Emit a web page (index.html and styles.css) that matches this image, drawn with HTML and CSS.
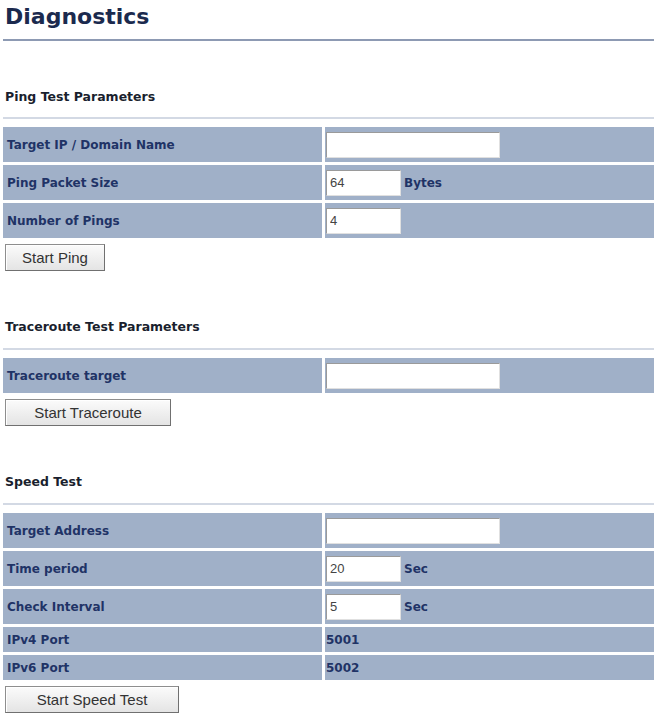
FILE: index.html
```html
<!DOCTYPE html>
<html lang="en">
<head>
    <meta charset="UTF-8">
    <title>Diagnostics</title>
    <link rel="stylesheet" href="styles.css">
</head>
<body>
    <h1 class="page-title">Diagnostics</h1>

    <h2 class="section-title">Ping Test Parameters</h2>
    <table class="param-table">
        <tr class="row-input">
            <td class="label">Target IP / Domain Name</td>
            <td class="value"><input type="text" class="field-wide"></td>
        </tr>
        <tr class="row-input">
            <td class="label">Ping Packet Size</td>
            <td class="value"><input type="text" class="field-small" value="64"><span class="unit">Bytes</span></td>
        </tr>
        <tr class="row-input">
            <td class="label">Number of Pings</td>
            <td class="value"><input type="text" class="field-small" value="4"></td>
        </tr>
    </table>
    <button class="btn btn-ping">Start Ping</button>

    <h2 class="section-title after-btn">Traceroute Test Parameters</h2>
    <table class="param-table">
        <tr class="row-input">
            <td class="label">Traceroute target</td>
            <td class="value"><input type="text" class="field-wide"></td>
        </tr>
    </table>
    <button class="btn btn-trace">Start Traceroute</button>

    <h2 class="section-title after-btn">Speed Test</h2>
    <table class="param-table">
        <tr class="row-input">
            <td class="label">Target Address</td>
            <td class="value"><input type="text" class="field-wide"></td>
        </tr>
        <tr class="row-input">
            <td class="label">Time period</td>
            <td class="value"><input type="text" class="field-small" value="20"><span class="unit">Sec</span></td>
        </tr>
        <tr class="row-input">
            <td class="label">Check Interval</td>
            <td class="value"><input type="text" class="field-small" value="5"><span class="unit">Sec</span></td>
        </tr>
        <tr class="row-text">
            <td class="label">IPv4 Port</td>
            <td class="value text">5001</td>
        </tr>
        <tr class="row-text">
            <td class="label">IPv6 Port</td>
            <td class="value text">5002</td>
        </tr>
    </table>
    <button class="btn btn-speed">Start Speed Test</button>
</body>
</html>
```
FILE: styles.css
```css
body {
    margin: 0;
    padding: 0 0 0 3px;
    background: white;
    font-family: 'DejaVu Sans', Verdana, sans-serif;
    color: #1d2c55;
}

.page-title {
    margin: 0;
    padding: 5px 0 10px 2px;
    font-size: 22px;
    font-weight: bold;
    color: #1b2a4e;
    border-bottom: 2px solid #8d9ab3;
    line-height: 24px;
}

.section-title {
    margin: 0;
    padding: 49px 0 13px 2px;
    font-size: 12.5px;
    font-weight: bold;
    color: #1a1f2e;
    line-height: 14px;
    border-bottom: 2px solid #d3d9e4;
}

.section-title.after-btn {
    padding-top: 49px;
    padding-bottom: 14px;
}

.section-title + .param-table {
    margin-top: 5px;
}

.param-table {
    width: 100%;
    border-collapse: separate;
    border-spacing: 0 3px;
    margin: 0;
}

.param-table td {
    background: #a0b0c8;
    padding: 0;
    font-size: 12px;
    font-weight: bold;
    color: #1f3366;
}

.label {
    width: 315px;
    padding-left: 4px !important;
    border-right: 3px solid white;
}

.row-input td {
    height: 35px;
}

.row-text td {
    height: 25px;
}

.value {
    padding-left: 1px !important;
}

.value.text {
    font-size: 12px;
}

input {
    font-family: 'Liberation Sans', Arial, sans-serif;
    font-size: 13px;
    color: #444;
    height: 26px;
    box-sizing: border-box;
    border: 1px solid #9a9a9a;
    border-right-color: #e0e0e0;
    border-bottom-color: #e0e0e0;
    padding: 2px 3px;
    vertical-align: middle;
    outline: none;
}

.field-wide {
    width: 174px;
}

.field-small {
    width: 75px;
}

.unit {
    font-size: 12px;
    font-weight: bold;
    color: #1f3366;
    margin-left: 3px;
    vertical-align: middle;
}

.btn {
    display: block;
    margin: 3px 0 0 2px;
    height: 27px;
    font-family: 'Liberation Sans', Arial, sans-serif;
    font-size: 15px;
    color: #333;
    background: linear-gradient(#fbfbfb, #e4e4e4);
    border: 1px solid #8e8e8e;
    border-right-color: #707070;
    border-bottom-color: #707070;
    box-shadow: inset 1px 1px 0 #fff;
    cursor: pointer;
}

.btn-ping {
    width: 100px;
}

.btn-trace {
    width: 166px;
}

.btn-speed {
    width: 174px;
}
```
